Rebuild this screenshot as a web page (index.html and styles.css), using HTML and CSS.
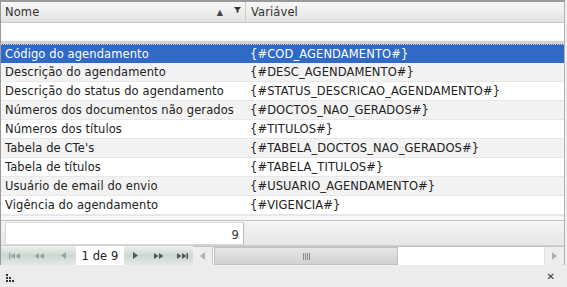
FILE: index.html
```html
<html lang="pt">
<head>
  <meta charset="UTF-8" />
  <title>Variáveis</title>
  <link rel="stylesheet" href="styles.css">
</head>
<body>
<div class="grid">
  <div class="head">
    <div class="hcell c1">
      <span class="htext">Nome</span>
      <span class="sort">&#9650;</span>
      <svg class="funnel" width="7" height="6" viewBox="0 0 7 6"><path d="M0 0H7L4.5 3V5.5H2.5V3Z" fill="#333"/></svg>
    </div>
    <div class="hcell c2"><span class="htext">Variável</span></div>
  </div>
  <div class="filter_row"></div>
  <div class="rows">
    <div class="row selected"><div class="cell c1">Código do agendamento</div><div class="cell c2">{#COD_AGENDAMENTO#}</div></div>
    <div class="row alt"><div class="cell c1">Descrição do agendamento</div><div class="cell c2">{#DESC_AGENDAMENTO#}</div></div>
    <div class="row"><div class="cell c1">Descrição do status do agendamento</div><div class="cell c2">{#STATUS_DESCRICAO_AGENDAMENTO#}</div></div>
    <div class="row alt"><div class="cell c1">Números dos documentos não gerados</div><div class="cell c2">{#DOCTOS_NAO_GERADOS#}</div></div>
    <div class="row"><div class="cell c1">Números dos títulos</div><div class="cell c2">{#TITULOS#}</div></div>
    <div class="row alt"><div class="cell c1">Tabela de CTe's</div><div class="cell c2">{#TABELA_DOCTOS_NAO_GERADOS#}</div></div>
    <div class="row"><div class="cell c1">Tabela de títulos</div><div class="cell c2">{#TABELA_TITULOS#}</div></div>
    <div class="row alt"><div class="cell c1">Usuário de email do envio</div><div class="cell c2">{#USUARIO_AGENDAMENTO#}</div></div>
    <div class="row"><div class="cell c1">Vigência do agendamento</div><div class="cell c2">{#VIGENCIA#}</div></div>
  </div>
  <div class="spacer"></div>
  <div class="summary">
    <div class="sumbox">9</div>
    <div class="sumrest"></div>
  </div>
  <div class="pager">
    <div class="pbtns">
      <span class="pbtn w26"><svg width="11" height="6" viewBox="0 0 11 6"><g fill="#9aa49f"><rect x="0" y="0" width="1.5" height="6"/><path d="M6 0V6L1.5 3Z"/><path d="M11 0V6L6.5 3Z"/></g></svg></span>
      <span class="pbtn w24"><svg width="10" height="6" viewBox="0 0 10 6"><g fill="#9aa49f"><path d="M5 0V6L0.5 3Z"/><path d="M10 0V6L5.5 3Z"/></g></svg></span>
      <span class="pbtn w25"><svg width="5" height="7" viewBox="0 0 5 7"><path d="M5 0V7L0 3.5Z" fill="#9aa49f"/></svg></span>
      <span class="page">1 de 9</span>
      <span class="pbtn w22"><svg width="5" height="7" viewBox="0 0 5 7"><path d="M0 0V7L5 3.5Z" fill="#555"/></svg></span>
      <span class="pbtn w25"><svg width="10" height="6" viewBox="0 0 10 6"><g fill="#555"><path d="M0 0V6L4.5 3Z"/><path d="M5 0V6L9.5 3Z"/></g></svg></span>
      <span class="pbtn w22"><svg width="11" height="6" viewBox="0 0 11 6"><g fill="#555"><path d="M0 0V6L4.5 3Z"/><path d="M5 0V6L9.5 3Z"/><rect x="9.5" y="0" width="1.5" height="6"/></g></svg></span>
    </div>
    <div class="hscroll">
      <span class="sarrow"><svg width="5" height="8" viewBox="0 0 5 8"><path d="M5 0V8L0 4Z" fill="#b0b0b0"/></svg></span>
      <span class="thumb"><span class="grip"></span></span>
      <span class="track"></span>
      <span class="sarrow"><svg width="5" height="8" viewBox="0 0 5 8"><path d="M0 0V8L5 4Z" fill="#b0b0b0"/></svg></span>
    </div>
  </div>
</div>
<div class="status">
  <svg class="dots" width="10" height="8" viewBox="0 0 10 8"><g fill="#333"><rect x="0" y="0" width="2" height="2"/><rect x="0" y="3" width="2" height="2"/><rect x="3" y="3" width="2" height="2"/><rect x="0" y="6" width="2" height="2"/><rect x="3" y="6" width="2" height="2"/><rect x="6" y="6" width="2" height="2"/></g></svg>
  <span class="close">&#10005;</span>
</div>
</body>
</html>
```

FILE: styles.css
```css
*{box-sizing:border-box;margin:0;padding:0;}
body{width:567px;height:287px;background:#f0f0f0;font-family:"DejaVu Sans",Verdana,sans-serif;font-size:11.5px;letter-spacing:0.1px;color:#222;overflow:hidden;}
.grid{width:565px;border-top:2px solid #9a9a9a;border-left:1px solid #9a9a9a;border-right:1px solid #b0b0b0;background:#fff;}

.head{display:flex;height:21px;background:linear-gradient(#f7f7f7,#e3e3e3);border-bottom:1px solid #c8c8c8;}
.hcell{display:flex;align-items:center;height:20px;color:#333;}
.hcell.c1{width:245px;border-right:1px solid #cfcfcf;padding-left:4px;}
.hcell.c2{flex:1;padding-left:5px;}
.htext{flex:1;}
.sort{font-size:8px;color:#444;margin-right:11px;}
.funnel{margin-right:4px;align-self:flex-start;margin-top:5px;}

.filter_row{height:21px;background:#fff;border-bottom:3px solid #d4d4d4;}

.rows{display:flex;flex-direction:column;}
.row{display:flex;height:19px;align-items:center;border-bottom:1px solid #e8e8e8;background:#fff;}
.row.alt{background:#f3f3f3;}
.row.selected{background:#3169c6;color:#fff;border-top:1px dotted #c8d4ee;border-bottom:1px solid #3169c6;}
.cell{white-space:nowrap;overflow:hidden;}
.cell.c1{width:245px;padding-left:4px;}
.cell.c2{flex:1;padding-left:4px;}

.spacer{height:6px;background:#f7f8fa;border-top:1px solid #e4e8ee;border-bottom:1px solid #c2c2c2;}

.summary{display:flex;height:25px;background:linear-gradient(#f5f5f5,#e6e6e6);padding:1px 0 1px 4px;border-bottom:1px solid #d0d0d0;}
.sumbox{width:239px;height:23px;background:#fff;border:1px solid #d8d8d8;border-right:1px solid #bdbdbd;text-align:right;padding:5px 4px 0 0;color:#333;}
.sumrest{flex:1;}

.pager{display:flex;height:19px;background:#eaeaea;}
.pbtns{display:flex;align-items:center;width:192px;background:linear-gradient(#eef1ef,#cdd7d1 50%,#e4e9e6);}
.pbtn{display:flex;align-items:center;justify-content:center;height:19px;}
.w22{width:22px;}
.w24{width:24px;}
.w25{width:25px;}
.w26{width:26px;}
.page{background:#fff;height:19px;width:48px;display:flex;align-items:center;justify-content:center;color:#222;}
.hscroll{flex:1;display:flex;height:19px;border-top:1px solid #c4c4c4;background:#fff;margin-right:1px;}
.sarrow{width:20px;display:flex;align-items:center;justify-content:center;background:#eeeeee;border-right:1px solid #c8c8c8;}
.sarrow:last-child{border-right:none;border-left:1px solid #e2e2e2;width:19px;}
.thumb{width:184px;margin-left:1px;background:linear-gradient(#e6e6e6,#d2d2d2);border:1px solid #c0c0c0;display:flex;align-items:center;justify-content:center;}
.grip{width:7px;height:7px;border-left:1px solid #888;border-right:1px solid #888;position:relative;}
.grip::before{content:"";position:absolute;left:1px;top:0;width:1px;height:7px;background:#888;box-shadow:2px 0 0 #888;}
.track{flex:1;background:#fff;}

.status{display:flex;align-items:center;justify-content:space-between;height:22px;background:#ececec;padding:0 12px 0 6px;}
.dots{margin-top:4px;}
.close{font-size:10px;color:#333;}
```
